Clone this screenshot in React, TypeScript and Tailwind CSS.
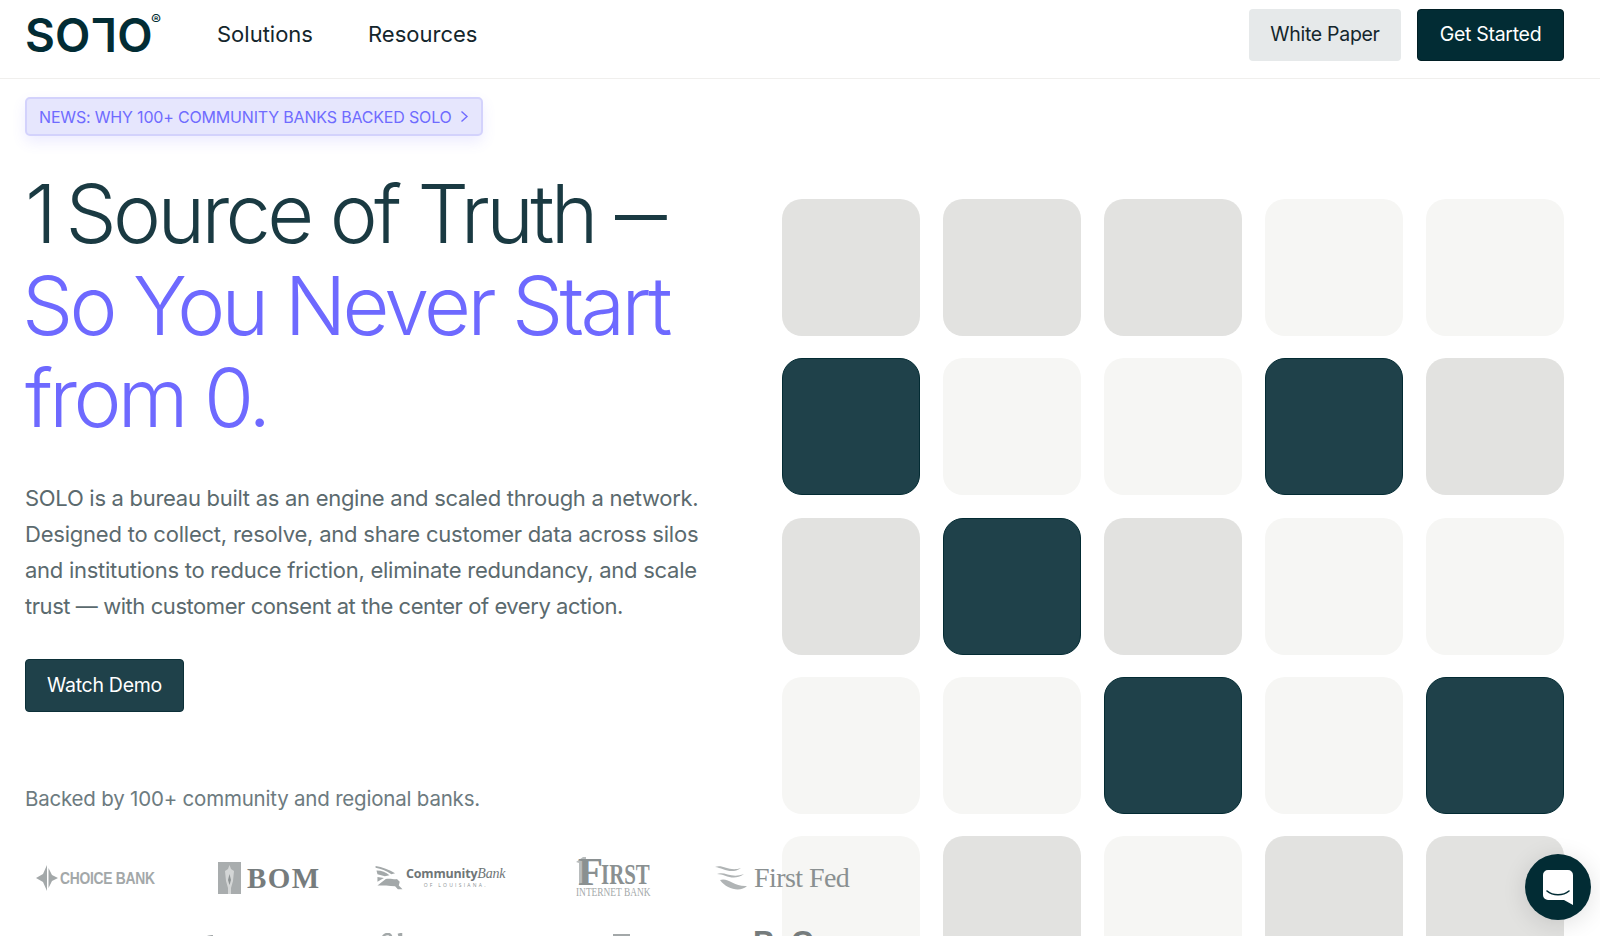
import React from "react";

const G = "bg-[#e2e2e0]";
const L = "bg-[#f6f6f4]";
const D = "bg-[#1f414a] border border-[#032b33]";
const cells = [
  G, G, G, L, L,
  D, L, L, D, G,
  G, D, G, L, L,
  L, L, D, L, D,
  L, G, L, G, G,
];

function Logo() {
  return (
    <div className="relative flex items-center h-[40px] w-[137px] text-[#022c34] [font-family:'Inter',sans-serif] font-semibold text-[46px] leading-none">
      <span>SO</span>
      <span className="inline-block rotate-180 ml-[1px]">L</span>
      <span>O</span>
      <span className="absolute left-[126px] top-[-3px] text-[15px] font-normal leading-none">®</span>
    </div>
  );
}

function ChoiceBank() {
  return (
    <div className="flex items-center gap-[2px] w-[120px] text-[#a3a8a9]">
      <svg className="shrink-0" width="22" height="26" viewBox="0 0 22 26" fill="currentColor">
        <path d="M11 0 L11 26 L7 17 L0 13 L7 9 Z" />
        <path d="M12.5 3 L16 10 L22 13 L16 16 L12.5 23 Z" />
      </svg>
      <span className="inline-block [font-family:'Liberation_Sans',sans-serif] font-bold text-[16.5px] tracking-[-0.02em] scale-x-[0.84] origin-left whitespace-nowrap">CHOICE BANK</span>
    </div>
  );
}

function Bom() {
  return (
    <div className="flex items-center gap-[6px] w-[100px] text-[#767c7d]">
      <svg className="shrink-0" width="23" height="32" viewBox="0 0 23 32">
        <rect width="23" height="32" fill="#a9adae" />
        <path d="M11.5 3 L13 7 L16 9 L15 19 L13 26 L13 32 L10 32 L10 26 L8 19 L7 9 L10 7 Z" fill="#d4d6d6" />
        <path d="M11.5 12 L13 18 L11.5 23 L10 18 Z" fill="#8f9495" />
      </svg>
      <span className="[font-family:'Liberation_Serif',serif] font-bold text-[29px] tracking-[0.05em] leading-none whitespace-nowrap">BOM</span>
    </div>
  );
}

function Community() {
  return (
    <div className="flex items-center gap-[1px] w-[132px]">
      <svg className="shrink-0" width="31" height="26" viewBox="0 0 32 28" fill="#a3a8a9">
        <path d="M1 1 C8 2 16 5 22 9 L18 10 C12 6 7 4 1 3 Z" />
        <path d="M2 6 C8 6 12 8 16 11 L11 12 L3 10 Z" />
        <path d="M3 13 L10 14 L3 18 Z" />
        <path d="M3 22 L12 15 C17 14 22 16 24 15 L27 18 L26 22 L30 26 L25 26 L22 23 C16 22 9 22 3 22 Z" />
      </svg>
      <div className="flex flex-col items-center mt-[-3px]">
        <div className="whitespace-nowrap text-[12.5px] leading-[15px] text-[#6f7677] [font-family:'Open_Sans',sans-serif] font-bold tracking-[-0.015em]">
          Community<span className="[font-family:'Liberation_Serif',serif] italic font-normal text-[14px]">Bank</span>
        </div>
        <div className="text-[5px] leading-[6px] mt-[1px] tracking-[0.45em] text-[#8d9394] [font-family:'Open_Sans',sans-serif] whitespace-nowrap">OF LOUISIANA.</div>
      </div>
    </div>
  );
}

function First() {
  return (
    <div className="relative flex flex-col w-[78px] text-[#8a9091] [font-family:'Liberation_Serif',serif] mt-[-1px]">
      <svg className="absolute left-0 top-0" width="12" height="28" viewBox="0 0 12 28" fill="#b8bcbd">
        <path d="M0 5 L7 0 L10 0 L10 28 L3 28 L3 6 Z" />
      </svg>
      <div className="flex items-end whitespace-nowrap font-bold pl-[2px]">
        <span className="relative text-[41px] leading-[28px] tracking-[-0.05em]">F</span>
        <span className="inline-block text-[29px] leading-[22px] scale-x-[0.72] origin-left">IRST</span>
      </div>
      <div className="inline-block text-[12px] leading-[13px] mt-[1px] whitespace-nowrap text-[#a3a8a9] scale-x-[0.78] origin-left">INTERNET BANK</div>
    </div>
  );
}

function FirstFed() {
  return (
    <div className="flex items-center gap-[7px] w-[140px] text-[#8a9091]">
      <svg className="shrink-0" width="32" height="24" viewBox="0 0 32 24" fill="#b0b4b5">
        <path d="M0 1 C8 -2 14 6 26 2 C16 9 8 2 0 1 Z" />
        <path d="M2 8 C10 5 16 13 29 8 C18 16 10 8 2 8 Z" />
        <path d="M5 14 C13 11 19 21 32 20 C26 26 12 24 5 14 Z" />
      </svg>
      <span className="[font-family:'Liberation_Serif',serif] text-[28px] leading-none tracking-[-0.02em] whitespace-nowrap">First Fed</span>
    </div>
  );
}

function SecondRow() {
  return (
    <div className="mt-[19px] flex h-[30px] w-[900px] items-start text-[#8a9091]">
      <svg className="ml-[176px] mt-[8px] shrink-0" width="12" height="6" viewBox="0 0 12 6" fill="#a3a8a9">
        <path d="M0 6 C3 1 8 0 12 0 L12 3 C8 3 6 4 5 6 Z" />
      </svg>
      <svg className="ml-[165px] mt-[6px] shrink-0" width="26" height="10" viewBox="0 0 26 10" fill="none" stroke="#a3a8a9" strokeWidth="2.5">
        <path d="M12 10 C2 8 4 1 10 1 C13 1 14 4 13 10" />
        <path d="M20 2 L23 1 L23 10" />
      </svg>
      <svg className="ml-[208px] mt-[7px] shrink-0" width="18" height="8" viewBox="0 0 18 8" fill="#a3a8a9">
        <path d="M1 0 H18 V8 H1 Z" />
        <path d="M8 4 L12 2 L10 8 Z M12 4 L16 2 L14 8 Z" fill="#ffffff" />
      </svg>
      <span className="ml-[123px] [font-family:'Liberation_Sans',sans-serif] font-bold text-[31px] leading-[31px] text-[#767c7d] whitespace-nowrap">PeC</span>
    </div>
  );
}

export default function App() {
  return (
    <div className="relative h-[936px] w-full overflow-hidden bg-white [font-family:'Inter',sans-serif]">
      <header className="flex h-[79px] items-center justify-between border-b border-[#f0efed] pb-[9px] pl-[25px] pr-[36px]">
        <div className="flex items-center">
          <Logo />
          <nav className="ml-[55px] flex gap-[55px] text-[22px] text-[#14262c]">
            <span>Solutions</span>
            <span>Resources</span>
          </nav>
        </div>
        <div className="flex items-center gap-[16px] text-[19.5px] tracking-[-0.015em]">
          <button className="h-[52px] w-[152px] rounded-[4px] bg-[#e6e9ea] text-[#14262c]">White Paper</button>
          <button className="h-[52px] w-[147px] rounded-[4px] border border-[#011f25] bg-[#022c34] text-white">Get Started</button>
        </div>
      </header>

      <main className="flex">
        <section className="relative z-10 w-[782px] shrink-0 pl-[25px]">
          <div className="mt-[18px] inline-flex h-[39px] items-center gap-[8px] rounded-[5px] border-2 border-[#d3d2fc] bg-[#e6e6fd] pl-[12px] pr-[12px] text-[16px] tracking-[-0.011em] text-[#6f6bff] shadow-[0_6px_14px_rgba(108,99,255,0.12)]">
            <span className="whitespace-nowrap">NEWS: WHY 100+ COMMUNITY BANKS BACKED SOLO</span>
            <svg width="9" height="13" viewBox="0 0 9 13" fill="none" stroke="currentColor" strokeWidth="1.4">
              <path d="M1.5 1.5 L7 6.5 L1.5 11.5" />
            </svg>
          </div>

          <h1 className="mt-[32px] text-[81px] font-light leading-[92px] tracking-[-0.045em] text-[#1a3a42]">
            <span className="block whitespace-nowrap">
              <span className="tracking-[-0.13em]">1</span> Source of Truth{" "}
              <span className="inline-block scale-x-[0.64] origin-left ml-[1px]">—</span>
            </span>
            <span className="block -ml-[3px] text-[#6e69ff]">So You Never Start</span>
            <span className="block text-[#6e69ff]">from 0.</span>
          </h1>

          <p className="mt-[36px] w-[700px] text-[22px] leading-[36px] text-[#5b6a6e]">
            <span className="block whitespace-nowrap tracking-[-0.013em]">SOLO is a bureau built as an engine and scaled through a network.</span>
            <span className="block whitespace-nowrap tracking-[-0.01em]">Designed to collect, resolve, and share customer data across silos</span>
            <span className="block whitespace-nowrap tracking-[-0.012em]">and institutions to reduce friction, eliminate redundancy, and scale</span>
            <span className="block whitespace-nowrap tracking-[-0.02em]">trust — with customer consent at the center of every action.</span>
          </p>

          <button className="mt-[35px] block h-[53px] w-[159px] rounded-[4px] border border-[#0c3038] bg-[#1f414a] text-[19.5px] tracking-[-0.015em] text-white">
            Watch Demo
          </button>

          <p className="mt-[71px] text-[20.5px] leading-[32px] tracking-[-0.01em] text-[#6d7b7f]">
            Backed by 100+ community and regional banks.
          </p>

          <div className="mt-[33px] flex h-[60px] w-[900px] items-center">
            <div className="ml-[11px]"><ChoiceBank /></div>
            <div className="ml-[62px]"><Bom /></div>
            <div className="ml-[56px]"><Community /></div>
            <div className="ml-[70px]"><First /></div>
            <div className="ml-[61px]"><FirstFed /></div>
          </div>
          <SecondRow />
        </section>

        <section className="flex-1 pr-[36px] pt-[120px]">
          <div className="grid grid-cols-5 gap-x-[23px] gap-y-[22.3px]">
            {cells.map((c, i) => (
              <div key={i} className={`h-[137px] rounded-[20px] ${c}`} />
            ))}
          </div>
        </section>
      </main>

      <div className="absolute left-[1525px] top-[854px] flex h-[66px] w-[66px] items-center justify-center rounded-full bg-[#022c34] shadow-[0_4px_24px_rgba(0,0,0,0.12)]">
        <svg width="30" height="35" viewBox="0 0 30 35">
          <path d="M5 0 H25 A5 5 0 0 1 30 5 V35 L21 30 H5 A5 5 0 0 1 0 25 V5 A5 5 0 0 1 5 0 Z" fill="white" />
          <path d="M4 21 C10 26 20 26 26 21" fill="none" stroke="#022c34" strokeWidth="1.6" strokeLinecap="round" />
        </svg>
      </div>
    </div>
  );
}
